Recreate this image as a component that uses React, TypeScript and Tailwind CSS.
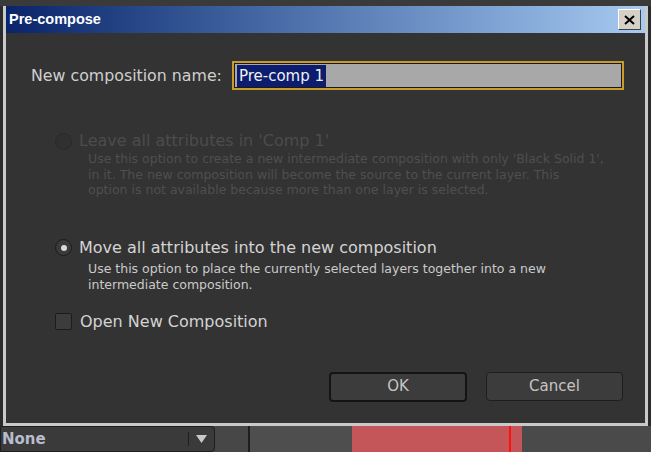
import { useState } from "react";

const ui = { fontFamily: '"DejaVu Sans", "Open Sans", sans-serif' };
const title = { fontFamily: '"Liberation Sans", Arial, sans-serif' };

function Radio({ checked, disabled }: { checked?: boolean; disabled?: boolean }) {
  return (
    <span
      className={
        "flex h-[17px] w-[17px] shrink-0 items-center justify-center rounded-full border " +
        (disabled ? "border-[#2a2a2a] bg-[#303030]" : "border-[#1c1c1c] bg-[#3a3a3a]")
      }
    >
      {checked && <span className="h-[6px] w-[6px] rounded-full bg-[#d8d8d8]" />}
    </span>
  );
}

export default function App() {
  const [name] = useState("Pre-comp 1");

  return (
    <div className="flex h-[452px] w-[651px] flex-col overflow-hidden bg-[#2b2b2b]" style={ui}>
      {/* host app strip behind the dialog */}
      <div className="h-[6px] bg-[#3a3a3a]" />

      {/* Dialog */}
      <div className="mx-[3px] flex h-[420px] flex-col border-x-[3px] border-b-[3px] border-[#c9c9c9] bg-[#333333]">
        {/* Title bar */}
        <div className="flex h-[27px] shrink-0 items-center justify-between bg-gradient-to-r from-[#0a246a] via-[#5578b2] to-[#a6caf0] pl-[3px] pr-[4px]">
          <span className="text-[14.5px] font-bold text-white" style={title}>Pre-compose</span>
          <button className="flex h-[21px] w-[23px] items-center justify-center border border-t-white border-l-white border-r-[#404040] border-b-[#404040] bg-[#d4d0c8]">
            <svg width="11" height="10" viewBox="0 0 11 10">
              <path d="M1 1 L10 9 M10 1 L1 9" stroke="#000" strokeWidth="2" />
            </svg>
          </button>
        </div>

        {/* Body */}
        <div className="flex flex-1 flex-col pl-[25px] pr-[22px] pt-[28px]">
          <div className="flex items-center gap-[10px]">
            <span className="text-[15.8px] text-[#cfcfcf]">New composition name:</span>
            <div className="-mr-[1px] flex h-[29px] flex-1 items-center border-2 border-[#c89b2c] bg-[#a8a8a8] px-[3px] shadow-[inset_0_0_0_1px_#1a1a1a]">
              <span className="bg-[#0c1c6e] px-[2px] text-[15px] leading-[22px] text-[#f0f0f0]">{name}</span>
            </div>
          </div>

          {/* Option 1: disabled */}
          <div className="mt-[41px] flex items-center gap-[7px] pl-[24px]">
            <Radio disabled />
            <span className="text-[16px] leading-[20px] text-[#4c4c4c]">Leave all attributes in 'Comp 1'</span>
          </div>
          <p className="ml-[57px] text-[12.5px] leading-[15.5px] text-[#4f4f4f]">
            Use this option to create a new intermediate composition with only 'Black Solid 1',
            <br />
            in it. The new composition will become the source to the current layer. This
            <br />
            option is not available because more than one layer is selected.
          </p>

          {/* Option 2 */}
          <div className="mt-[40px] flex items-center gap-[7px] pl-[24px]">
            <Radio checked />
            <span className="text-[16px] leading-[20px] text-[#d4d4d4]">Move all attributes into the new composition</span>
          </div>
          <p className="ml-[57px] mt-[3px] text-[12.5px] leading-[16px] text-[#cacaca]">
            Use this option to place the currently selected layers together into a new
            <br />
            intermediate composition.
          </p>

          {/* Checkbox */}
          <div className="mt-[19px] flex items-center gap-[8px] pl-[24px]">
            <span className="h-[17px] w-[17px] rounded-[2px] border border-[#1c1c1c] bg-[#3c3c3c]" />
            <span className="text-[16px] leading-[20px] text-[#d4d4d4]">Open New Composition</span>
          </div>

          {/* Buttons */}
          <div className="mt-[40px] flex justify-end gap-[19px]">
            <button className="h-[30px] w-[138px] rounded-[4px] border-2 border-[#141414] bg-[#3c3c3c] text-[15px] text-[#c4c4c4]">
              OK
            </button>
            <button className="h-[29px] w-[137px] rounded-[4px] border border-[#1e1e1e] bg-[#3c3c3c] text-[15px] text-[#c4c4c4]">
              Cancel
            </button>
          </div>
        </div>
      </div>

      {/* Host app bottom bar */}
      <div className="flex h-[26px] items-stretch bg-[#444444]">
        <div className="flex w-[215px] items-center justify-between rounded-r-[4px] border border-[#1e1e1e] bg-[#3a3a3a] pl-[1px]">
          <span className="text-[15px] font-semibold text-[#b9bccb]">None</span>
          <div className="flex h-full items-center">
            <span className="h-[14px] w-px bg-[#1e1e1e]" />
            <svg className="mx-[7px]" width="11" height="8" viewBox="0 0 11 8">
              <path d="M0 0 H11 L5.5 8 Z" fill="#c8c8c8" />
            </svg>
          </div>
        </div>
        <div className="w-[33px] bg-[#474747]" />
        <div className="w-[2px] bg-[#1e1e1e]" />
        <div className="w-[102px] bg-[#4e4e4e]" />
        <div className="flex w-[170px] justify-end bg-[#c45558] pr-[11px]">
          <span className="w-[2px] bg-[#ff1010]" />
        </div>
        <div className="flex-1 bg-[#4a4a4a]" />
      </div>
    </div>
  );
}
